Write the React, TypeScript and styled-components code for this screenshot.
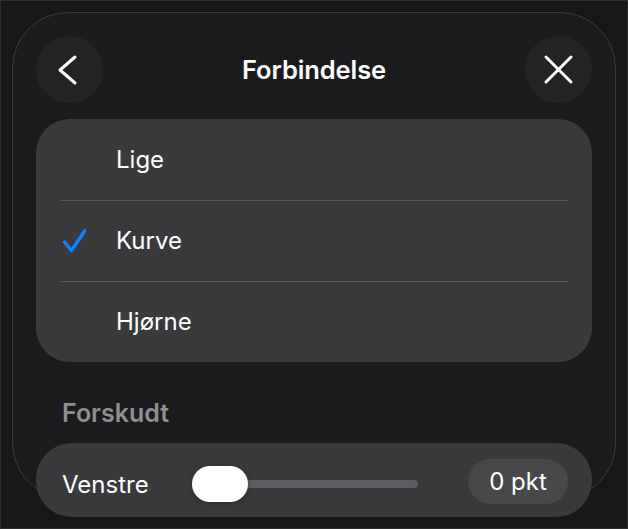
import React from "react";
import styled, { createGlobalStyle } from "styled-components";

const Global = createGlobalStyle`
  html, body { margin: 0; padding: 0; background: #171719; }
  * { box-sizing: border-box; }
  body { font-family: Inter, "Noto Sans", "Liberation Sans", sans-serif; -webkit-font-smoothing: antialiased; }
`;

const Frame = styled.div`
  width: 628px;
  height: 529px;
  background: #171719;
  border: 1px solid #2e2e30;
  padding: 11px 11px 0 11px;
  overflow: hidden;
`;

const Panel = styled.div`
  height: 487px;
  background: #1b1b1d;
  border: 1px solid #3a3a3c;
  border-radius: 56px;
  padding: 23px 23px 0 23px;
  display: flex;
  flex-direction: column;
`;

const Header = styled.div`
  display: flex;
  align-items: center;
  justify-content: space-between;
  height: 67px;
`;

const RoundButton = styled.button`
  width: 67px;
  height: 67px;
  border-radius: 50%;
  border: none;
  background: #232325;
  padding: 0;
  display: flex;
  align-items: center;
  justify-content: center;
  cursor: pointer;
`;

const Title = styled.div`
  color: #ffffff;
  font-size: 25.5px;
  font-weight: 600;
  letter-spacing: -0.1px;
`;

const ListCard = styled.div`
  margin-top: 16px;
  background: #3a3a3c;
  border-radius: 34px;
  display: flex;
  flex-direction: column;
`;

const Row = styled.div<{ $divider?: boolean }>`
  height: 81px;
  display: flex;
  align-items: center;
  position: relative;
  padding-left: 24px;
  &::before {
    content: "";
    display: ${(p) => (p.$divider ? "block" : "none")};
    position: absolute;
    top: 0;
    left: 25px;
    right: 24px;
    height: 1px;
    background: #5a5a5e;
  }
`;

const CheckSlot = styled.div`
  width: 56px;
  height: 24px;
  display: flex;
  align-items: center;
`;

const RowLabel = styled.span`
  color: #ffffff;
  font-size: 24px;
  font-weight: 400;
`;

const SectionLabel = styled.div`
  margin-top: 36px;
  padding-left: 26px;
  height: 30px;
  line-height: 30px;
  color: #8e8e93;
  font-size: 25px;
  font-weight: 600;
`;

const SliderCard = styled.div`
  margin-top: 15px;
  flex-shrink: 0;
  height: 74px;
  background: #3a3a3c;
  border-radius: 36px;
  padding: 8px 24px 0 26px;
  display: flex;
  align-items: center;
`;

const SliderLabel = styled.span`
  width: 130px;
  color: #ffffff;
  font-size: 24px;
`;

const Track = styled.div`
  position: relative;
  width: 226px;
  height: 8px;
  border-radius: 4px;
  background: #5e5e62;
`;

const Thumb = styled.div`
  position: absolute;
  left: 0;
  top: 50%;
  transform: translateY(-50%);
  width: 56px;
  height: 36px;
  border-radius: 18px;
  background: #ffffff;
  box-shadow: 0 1px 4px rgba(0, 0, 0, 0.35);
`;

const ValuePill = styled.div`
  margin-left: auto;
  margin-top: -5px;
  width: 100px;
  height: 45px;
  border-radius: 23px;
  background: #48484a;
  color: #ffffff;
  font-size: 24px;
  display: flex;
  align-items: center;
  justify-content: center;
`;

const items = [
  { label: "Lige", checked: false },
  { label: "Kurve", checked: true },
  { label: "Hjørne", checked: false },
];

export default function App() {
  return (
    <>
      <Global />
      <Frame>
        <Panel>
          <Header>
            <RoundButton aria-label="Tilbage">
              <svg width="67" height="67" viewBox="0 0 67 67">
                <path d="M39 21 L24 34 L39 47" fill="none" stroke="#fff" strokeWidth="3" strokeLinecap="round" strokeLinejoin="round" />
              </svg>
            </RoundButton>
            <Title>Forbindelse</Title>
            <RoundButton aria-label="Luk">
              <svg width="67" height="67" viewBox="0 0 67 67">
                <path d="M21 21 L46 46 M46 21 L21 46" fill="none" stroke="#fff" strokeWidth="3" strokeLinecap="round" />
              </svg>
            </RoundButton>
          </Header>
          <ListCard>
            {items.map((it, i) => (
              <Row key={it.label} $divider={i > 0}>
                <CheckSlot>
                  {it.checked && (
                    <svg width="26" height="26" viewBox="0 0 26 26">
                      <path d="M4.5 14 L11.5 22.5 L25 2.5" fill="none" stroke="#0a84ff" strokeWidth="3.4" strokeLinecap="round" strokeLinejoin="round" />
                    </svg>
                  )}
                </CheckSlot>
                <RowLabel>{it.label}</RowLabel>
              </Row>
            ))}
          </ListCard>
          <SectionLabel>Forskudt</SectionLabel>
          <SliderCard>
            <SliderLabel>Venstre</SliderLabel>
            <Track>
              <Thumb />
            </Track>
            <ValuePill>0 pkt</ValuePill>
          </SliderCard>
        </Panel>
      </Frame>
    </>
  );
}
